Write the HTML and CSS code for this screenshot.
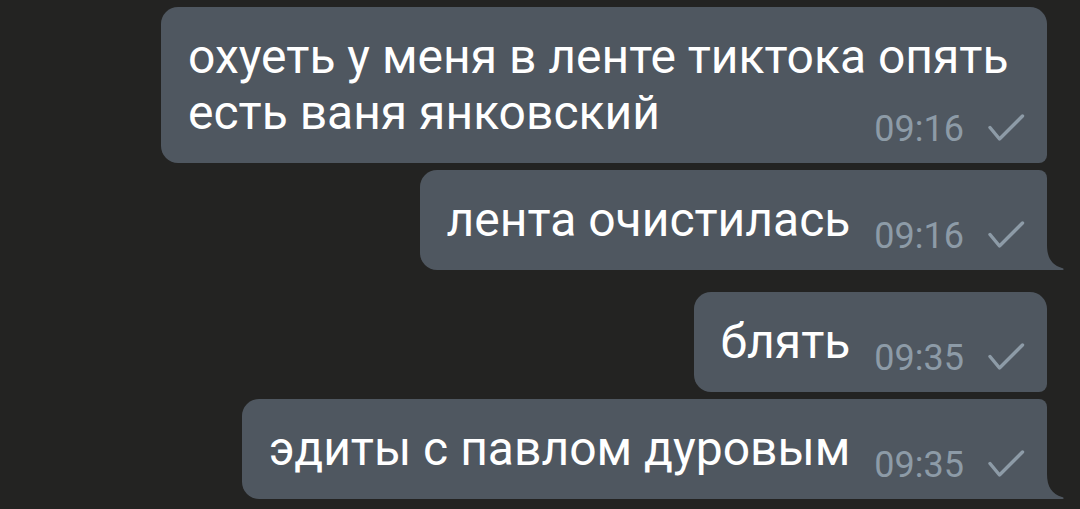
FILE: index.html
```html
<!DOCTYPE html>
<html lang="ru">
<head>
<meta charset="utf-8">
<title>Чат</title>
<link rel="stylesheet" href="styles.css">
</head>
<body>
<main class="chat">
  <section class="group">
    <div class="bubble first">
      <p class="text">охуеть у меня в ленте тиктока опять есть ваня янковский<span class="meta"><span class="time">09:16</span><svg class="check" viewBox="0 0 37 27" width="37" height="27"><path d="M2 13.5 L11.5 25 L34.5 2"/></svg></span></p>
    </div>
    <div class="bubble last">
      <p class="text">лента очистилась<span class="meta"><span class="time">09:16</span><svg class="check" viewBox="0 0 37 27" width="37" height="27"><path d="M2 13.5 L11.5 25 L34.5 2"/></svg></span></p>
      <svg class="tail" viewBox="-1 0 18 25" width="18" height="25"><path d="M-1 0 L0 0 C0 13 5 20 15 23 C17.5 23.8 17 25 15 25 L-1 25 Z"/></svg>
    </div>
  </section>
  <section class="group">
    <div class="bubble first">
      <p class="text">блять<span class="meta"><span class="time">09:35</span><svg class="check" viewBox="0 0 37 27" width="37" height="27"><path d="M2 13.5 L11.5 25 L34.5 2"/></svg></span></p>
    </div>
    <div class="bubble last">
      <p class="text">эдиты с павлом дуровым<span class="meta"><span class="time">09:35</span><svg class="check" viewBox="0 0 37 27" width="37" height="27"><path d="M2 13.5 L11.5 25 L34.5 2"/></svg></span></p>
      <svg class="tail" viewBox="-1 0 18 25" width="18" height="25"><path d="M-1 0 L0 0 C0 13 5 20 15 23 C17.5 23.8 17 25 15 25 L-1 25 Z"/></svg>
    </div>
  </section>
</main>
</body>
</html>
```
FILE: styles.css
```css
html, body {
  margin: 0;
  padding: 0;
  background: #232322;
  height: 100%;
  overflow: hidden;
}

.chat {
  display: flex;
  flex-direction: column;
  align-items: flex-end;
  gap: 22px;
  padding: 7px 33px 0 0;
  font-family: Roboto, "Noto Sans", sans-serif;
}

.group {
  display: flex;
  flex-direction: column;
  align-items: flex-end;
  gap: 7px;
}

.bubble {
  position: relative;
  display: flex;
  max-width: 886px;
  box-sizing: border-box;
  padding: 22px 22px 22px 27px;
  background: #4f5760;
  border-radius: 17px;
}

.bubble.first {
  border-bottom-right-radius: 8px;
}

.bubble.last {
  border-top-right-radius: 8px;
  border-bottom-right-radius: 0;
}

.text {
  margin: 0;
  color: #ffffff;
  font-size: 48px;
  line-height: 56px;
}

.meta {
  float: right;
  display: flex;
  align-items: baseline;
  gap: 24px;
  margin: 26px 0 -6px 24px;
  color: #8d9ba7;
  font-size: 36px;
  line-height: 36px;
}

.check {
  display: block;
  fill: none;
  stroke: #8d9ba7;
  stroke-width: 3.4;
  stroke-linecap: round;
  stroke-linejoin: round;
}

.tail {
  position: absolute;
  right: -17px;
  bottom: 0;
  fill: #4f5760;
}
```
